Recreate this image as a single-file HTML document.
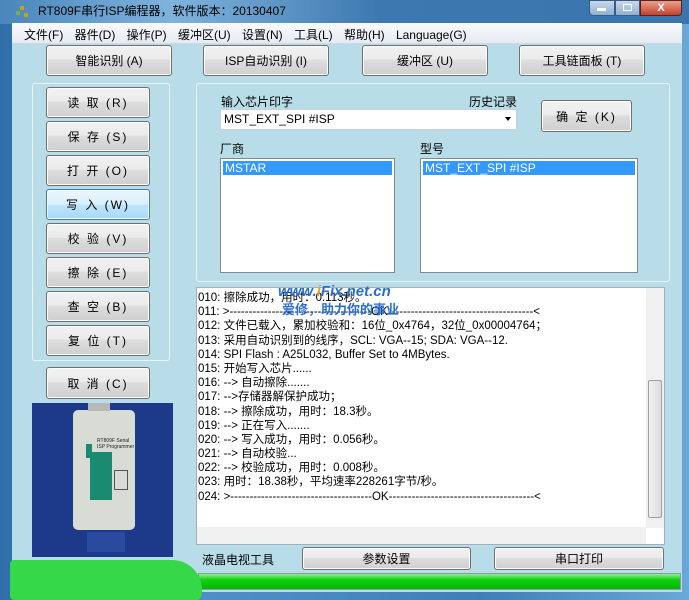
<!DOCTYPE html>
<html><head><meta charset="utf-8"><style>
*{margin:0;padding:0;box-sizing:border-box}
body{width:689px;height:600px;overflow:hidden;position:relative;font-family:"Liberation Sans","Noto Sans CJK SC",sans-serif;font-size:12px;color:#000;background:#4d8fc4}
.a{position:absolute}
.btn{position:absolute;border:1px solid #707070;border-radius:3px;background:linear-gradient(#f2f2f2 0%,#ebebeb 45%,#dddddd 50%,#cfcfcf 100%);display:flex;align-items:center;justify-content:center;font-size:12px;box-shadow:inset 0 0 0 1px #fcfcfc}
.grp{position:absolute;border:1px solid #e8f4f8;border-radius:3px}
.list{position:absolute;background:#fff;border:1px solid #828790}
.sel{position:absolute;left:2px;right:2px;top:2px;height:14px;background:#3399ff;color:#fff;padding-left:2px;line-height:14px}
.log div{height:14.2px;line-height:14.2px;white-space:nowrap}
</style></head><body>
<div class="a" style="left:0;top:0;width:689px;height:600px;background:linear-gradient(90deg,#2f6ea8,#4d90c8 30%,#3f7fb8 70%,#6aa8d8)"></div>
<div class="a" style="left:0;top:0;width:689px;height:24px;background:linear-gradient(90deg,#4a86bb,#7fb3dc 25%,#3d79b0 55%,#3a75ad)"></div>
<div class="a" style="left:20px;top:6px;width:4px;height:4px;background:#c8a020"></div>
<div class="a" style="left:16px;top:11px;width:4px;height:4px;background:#7ab040"></div>
<div class="a" style="left:24px;top:13px;width:4px;height:4px;background:#c8a020"></div>
<div class="a" style="left:38px;top:2px;font-size:12px;color:#000">RT809F串行ISP编程器，软件版本：20130407</div>
<div class="a" style="left:589px;top:0;width:26px;height:16px;border:1px solid #3a5a80;border-radius:0 0 0 4px;background:linear-gradient(#c8d8ea,#8fb0d4)"></div>
<div class="a" style="left:615px;top:0;width:25px;height:16px;border:1px solid #3a5a80;background:linear-gradient(#c8d8ea,#8fb0d4)"></div>
<div class="a" style="left:640px;top:0;width:42px;height:16px;border:1px solid #5a2020;border-radius:0 0 4px 0;background:linear-gradient(#e8a090,#c8402a);color:#fff;font-weight:bold;text-align:center;font-size:11px;line-height:14px">X</div>
<div class="a" style="left:597px;top:8px;width:9px;height:3px;background:#fff"></div>
<div class="a" style="left:623px;top:4px;width:9px;height:7px;border:1px solid #fff"></div>
<!-- menu -->
<div class="a" style="left:12px;top:23px;width:670px;height:21px;background:linear-gradient(#fafbfd,#e6ebf3);border-bottom:1px solid #d0d8e0"></div>
<div class="a" style="left:24px;top:26px;font-size:12px;word-spacing:8px;white-space:nowrap">文件(F) 器件(D) 操作(P) 缓冲区(U) 设置(N) 工具(L) 帮助(H) Language(G)</div>
<!-- client -->
<div class="a" style="left:12px;top:44px;width:670px;height:548px;background:#b9dde8"></div>
<div class="btn" style="left:46px;top:45px;width:126px;height:31px">智能识别 (A)</div>
<div class="btn" style="left:203px;top:45px;width:126px;height:31px">ISP自动识别 (I)</div>
<div class="btn" style="left:362px;top:45px;width:126px;height:31px">缓冲区 (U)</div>
<div class="btn" style="left:519px;top:45px;width:126px;height:31px">工具链面板 (T)</div>
<div class="grp" style="left:32px;top:83px;width:138px;height:278px"></div>
<div class="btn" style="left:46px;top:87px;width:104px;height:31px;letter-spacing:2px">读 取 (R)</div>
<div class="btn" style="left:46px;top:121px;width:104px;height:31px;letter-spacing:2px">保 存 (S)</div>
<div class="btn" style="left:46px;top:155px;width:104px;height:31px;letter-spacing:2px">打 开 (O)</div>
<div class="btn" style="left:46px;top:189px;width:104px;height:31px;letter-spacing:2px;border-color:#3c7fb1;background:linear-gradient(#eaf6fd,#d9f0fc 50%,#bee6fd 51%,#a7d9f5)">写 入 (W)</div>
<div class="btn" style="left:46px;top:223px;width:104px;height:31px;letter-spacing:2px">校 验 (V)</div>
<div class="btn" style="left:46px;top:257px;width:104px;height:31px;letter-spacing:2px">擦 除 (E)</div>
<div class="btn" style="left:46px;top:291px;width:104px;height:31px;letter-spacing:2px">查 空 (B)</div>
<div class="btn" style="left:46px;top:325px;width:104px;height:31px;letter-spacing:2px">复 位 (T)</div>
<div class="btn" style="left:46px;top:367px;width:104px;height:32px;letter-spacing:2px">取 消 (C)</div>
<!-- image -->
<div class="a" style="left:32px;top:403px;width:141px;height:154px;background:#1d3a8a"></div>
<div class="a" style="left:73px;top:410px;width:62px;height:120px;background:#d8dcd4;border-radius:5px"></div>
<div class="a" style="left:88px;top:403px;width:22px;height:8px;background:#b8b8b8"></div>
<div class="a" style="left:87px;top:532px;width:38px;height:20px;background:#2a4aa0"></div>
<div class="a" style="left:90px;top:452px;width:22px;height:48px;background:#1a8a70"></div>
<div class="a" style="left:86px;top:444px;width:6px;height:14px;background:#1a8a70"></div>
<div class="a" style="left:114px;top:470px;width:14px;height:20px;border:1px solid #555"></div>
<div class="a" style="left:97px;top:438px;font-size:5px;color:#222">RT809F Serial<br>ISP Programmer</div>
<!-- right group -->
<div class="grp" style="left:196px;top:83px;width:474px;height:199px"></div>
<div class="a" style="left:221px;top:93px">输入芯片印字</div>
<div class="a" style="left:469px;top:93px">历史记录</div>
<div class="a" style="left:220px;top:109px;width:297px;height:21px;background:#fff;border:1px solid #c8d2da;padding-left:3px;line-height:19px">MST_EXT_SPI #ISP</div>
<div class="a" style="left:505px;top:117px;width:0;height:0;border-left:3px solid transparent;border-right:3px solid transparent;border-top:4px solid #000"></div>
<div class="btn" style="left:541px;top:100px;width:91px;height:32px;letter-spacing:2px">确 定 (K)</div>
<div class="a" style="left:220px;top:140px">厂商</div>
<div class="a" style="left:420px;top:140px">型号</div>
<div class="list" style="left:220px;top:158px;width:175px;height:115px"><div class="sel">MSTAR</div></div>
<div class="list" style="left:420px;top:158px;width:218px;height:115px"><div class="sel">MST_EXT_SPI #ISP</div></div>
<!-- log -->
<div class="a" style="left:196px;top:287px;width:469px;height:258px;background:#fff;border:1px solid #a0b0c0"></div>
<div class="a log" style="left:198px;top:291px;font-size:11.5px">
<div>010: 擦除成功，用时：0.113秒。</div>
<div>011: &gt;-------------------------------------OK--------------------------------------&lt;</div>
<div>012: 文件已载入，累加校验和：16位_0x4764，32位_0x00004764；</div>
<div>013: 采用自动识别到的线序，SCL: VGA--15; SDA: VGA--12.</div>
<div>014: SPI Flash : A25L032, Buffer Set to 4MBytes.</div>
<div>015: 开始写入芯片......</div>
<div>016: --&gt; 自动擦除.......</div>
<div>017: --&gt;存储器解保护成功；</div>
<div>018: --&gt; 擦除成功，用时：18.3秒。</div>
<div>019: --&gt; 正在写入.......</div>
<div>020: --&gt; 写入成功，用时：0.056秒。</div>
<div>021: --&gt; 自动校验...</div>
<div>022: --&gt; 校验成功，用时：0.008秒。</div>
<div>023: 用时：18.38秒，平均速率228261字节/秒。</div>
<div>024: &gt;-------------------------------------OK--------------------------------------&lt;</div>
</div>
<div class="a" style="left:646px;top:288px;width:18px;height:240px;background:#f0f0f0"></div>
<div class="a" style="left:648px;top:380px;width:14px;height:138px;background:linear-gradient(90deg,#f0f0f0,#dcdcdc);border:1px solid #a0a0a0;border-radius:2px"></div>
<div class="a" style="left:197px;top:527px;width:449px;height:17px;background:#f0f0f0"></div>
<div class="a" style="left:278px;top:283px;font-size:15px;font-weight:bold;font-style:italic;color:#2a6fd0">www.<span style="color:#f0a000">i</span>Fix.net.cn</div>
<div class="a" style="left:282px;top:299px;font-size:13px;font-weight:bold;color:#2a6fd0">爱修，助力你的事业</div>
<!-- bottom -->
<div class="a" style="left:202px;top:551px;font-size:12px">液晶电视工具</div>
<div class="btn" style="left:302px;top:547px;width:169px;height:23px">参数设置</div>
<div class="btn" style="left:494px;top:547px;width:170px;height:23px">串口打印</div>
<div class="a" style="left:198px;top:573px;width:483px;height:17px;border:1px solid #8a9aa0;background:linear-gradient(#8ef08e,#10d010 40%,#00b800)"></div>
<div class="a" style="left:10px;top:560px;width:192px;height:40px;background:#35d848;border-radius:4px 30px 6px 4px"></div>
</body></html>
